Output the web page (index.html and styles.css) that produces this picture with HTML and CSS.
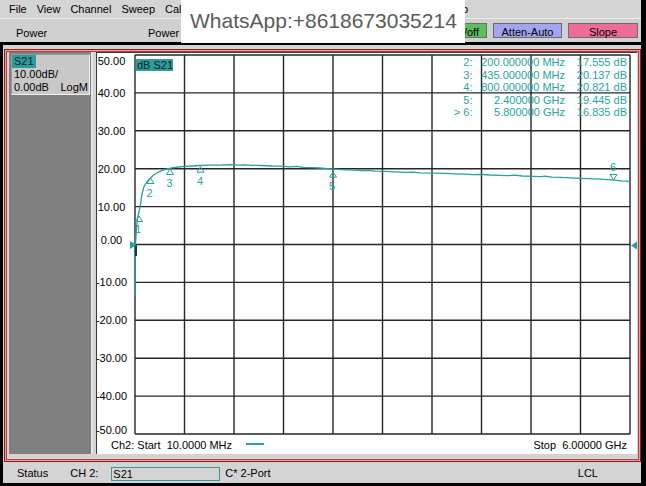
FILE: index.html
```html
<!DOCTYPE html>
<html>
<head>
<meta charset="utf-8">
<link rel="stylesheet" href="styles.css">
</head>
<body>
<div class="app">
  <div class="menubar">
    <span class="menu-item">File</span>
    <span class="menu-item">View</span>
    <span class="menu-item">Channel</span>
    <span class="menu-item">Sweep</span>
    <span class="menu-item">Calibration</span>
    <span class="menu-item menu-help">Help</span>
  </div>
  <div class="toolbar">
    <span class="tb-label tb-first">Power</span>
    <span class="tb-label">Power</span>
    <span class="tb-btn btn-green">On/off</span>
    <span class="tb-btn btn-atten">Atten-Auto</span>
    <span class="tb-btn btn-slope">Slope</span>
  </div>
  <div class="main">
    <div class="frame">
      <div class="side">
        <div class="side-box">
          <div class="line"><span class="sel">S21</span></div>
          <div class="line pad">10.00dB/</div>
          <div class="line pad split"><span>0.00dB</span><span>LogM</span></div>
        </div>
      </div>
      <div class="plot">
        <svg class="chart" width="540" height="385" viewBox="97 53 540 385">
          <g class="grid">
            <line x1="135" y1="55" x2="135" y2="434"/>
            <line x1="184.5" y1="55" x2="184.5" y2="434"/>
            <line x1="234" y1="55" x2="234" y2="434"/>
            <line x1="283.5" y1="55" x2="283.5" y2="434"/>
            <line x1="333" y1="55" x2="333" y2="434"/>
            <line x1="382.5" y1="55" x2="382.5" y2="434"/>
            <line x1="432" y1="55" x2="432" y2="434"/>
            <line x1="481.5" y1="55" x2="481.5" y2="434"/>
            <line x1="531" y1="55" x2="531" y2="434"/>
            <line x1="580.5" y1="55" x2="580.5" y2="434"/>
            <line x1="630" y1="55" x2="630" y2="434"/>
            <line x1="135" y1="55" x2="630" y2="55"/>
            <line x1="135" y1="92.9" x2="630" y2="92.9"/>
            <line x1="135" y1="130.8" x2="630" y2="130.8"/>
            <line x1="135" y1="168.7" x2="630" y2="168.7"/>
            <line x1="135" y1="206.6" x2="630" y2="206.6"/>
            <line x1="135" y1="244.5" x2="630" y2="244.5"/>
            <line x1="135" y1="282.4" x2="630" y2="282.4"/>
            <line x1="135" y1="320.3" x2="630" y2="320.3"/>
            <line x1="135" y1="358.2" x2="630" y2="358.2"/>
            <line x1="135" y1="396.1" x2="630" y2="396.1"/>
            <line x1="135" y1="434" x2="630" y2="434"/>
          </g>
          <g class="ylabels">
            <text x="111.5" y="65">50.00</text>
            <text x="111.5" y="96.5">40.00</text>
            <text x="111.5" y="134.5">30.00</text>
            <text x="111.5" y="172.5">20.00</text>
            <text x="111.5" y="210.5">10.00</text>
            <text x="111.5" y="244">0.00</text>
            <text x="111.5" y="286">-10.00</text>
            <text x="111.5" y="324">-20.00</text>
            <text x="111.5" y="362">-30.00</text>
            <text x="111.5" y="400">-40.00</text>
            <text x="111.5" y="434">-50.00</text>
          </g>
          <rect class="tag" x="136" y="59" width="37" height="12"/>
          <text class="tag-text" x="137" y="69">dB S21</text>
          <polyline class="trace" points="135,296 135,260 135.5,244 136.5,228 137.5,218 139,212 140.5,204 142,194 143.5,188 145.5,184 148,180.5 150.5,178 153,175.5 156,173.5 159,171.8 163,170.2 167,169 172,167.8 178,167 185,166.4 192,166 200,165.5 210,165.2 222,165 232,164.6 238,165.1 245,164.9 252,165.3 262,165.5 272,166 281,166.2 290,166.8 297,166.3 303,167.4 312,167.6 320,168 327,168.6 335,169.2 345,169.8 355,170.1 362,170.6 368,170.3 375,171.1 385,171.4 395,171.9 405,172.3 413,172.1 420,172.8 432,173.2 445,173.4 455,173.9 465,174.2 472,174.6 480,174.4 490,175 500,175.3 508,175.6 515,175.2 522,176 533,176.4 541,176.6 545,176.2 552,177.1 560,177.4 570,177.8 580,178.3 590,178.7 600,179.1 608,179.6 615,180.1 622,180.8 630,181.4"/>
          <line class="refline" x1="136" y1="244" x2="136" y2="256"/>
          <polygon class="ref" points="130,241 136.5,245 130,249"/>
          <polygon class="ref" points="637,241.5 631,245.5 637,249.5"/>
          <g class="mk">
            <polygon points="139,216 142.5,221.5 135.5,221.5"/>
            <polygon points="150.5,178 154,183.5 147,183.5"/>
            <polygon points="170,169 173.5,174.5 166.5,174.5"/>
            <polygon points="200.5,166.7 204,172.2 197,172.2"/>
            <polygon points="333,171.7 336.5,177.2 329.5,177.2"/>
            <polygon points="613.5,180 617,174.5 610,174.5"/>
          </g>
          <g class="mk-label">
            <text x="138" y="233">1</text>
            <text x="149.5" y="197">2</text>
            <text x="169.5" y="187">3</text>
            <text x="200" y="184.5">4</text>
            <text x="332" y="189.5">5</text>
            <text x="613" y="170.5">6</text>
          </g>
        </svg>
        <div class="readout">
          <span>2:</span><span>200.000000 MHz</span><span>17.555 dB</span>
          <span>3:</span><span>435.000000 MHz</span><span>20.137 dB</span>
          <span>4:</span><span>800.000000 MHz</span><span>20.821 dB</span>
          <span>5:</span><span>2.400000 GHz</span><span>19.445 dB</span>
          <span>&gt; 6:</span><span>5.800000 GHz</span><span>16.835 dB</span>
        </div>
        <div class="footer">
          <span class="start">Ch2: Start  10.0000 MHz</span>
          <span class="dash"></span>
          <span class="stop">Stop  6.00000 GHz</span>
        </div>
      </div>
    </div>
  </div>
  <div class="status">
    <span class="st-status">Status</span>
    <span class="st-ch">CH 2:</span>
    <span class="st-box">S21</span>
    <span class="st-port">C* 2-Port</span>
    <span class="st-lcl">LCL</span>
  </div>
  <div class="wa">WhatsApp:+8618673035214</div>
</div>
</body>
</html>
```
FILE: styles.css
```css
* { box-sizing: border-box; }

body {
  margin: 0;
  background: #000;
  font-family: "Liberation Sans", Arial, sans-serif;
  font-size: 11px;
  color: #000;
}

.app {
  position: relative;
  width: 646px;
  height: 486px;
  display: flex;
  flex-direction: column;
  overflow: hidden;
}

.menubar {
  height: 19px;
  margin-right: 5px;
  padding: 1px 0 0 4px;
  background: #d4d4d4;
  border-bottom: 1px solid #ececec;
  display: flex;
  line-height: 17px;
  white-space: nowrap;
}

.menu-item { padding: 0 5px; }

.menu-help { margin-left: 218px; }

.toolbar {
  height: 23px;
  margin-right: 5px;
  padding: 0 3px 0 16px;
  background: #d0d0d0;
  display: flex;
  align-items: flex-start;
  white-space: nowrap;
}

.tb-label {
  margin-top: 8px;
  line-height: 13px;
}

.tb-first { width: 132px; }

.tb-btn {
  margin-top: 4px;
  height: 15px;
  border: 1px solid #6c6c6c;
  padding-top: 2px;
  line-height: 12px;
  text-align: center;
}

.btn-green {
  margin-left: auto;
  padding-left: 7px;
  padding-right: 7px;
  background: #5cbf5c;
}

.btn-atten {
  width: 69px;
  margin-left: 6px;
  background: #a3a3f2;
}

.btn-slope {
  width: 70px;
  margin-left: 6px;
  background: #f06c98;
}

.main {
  height: 417px;
  margin: 3px 5px 0 3px;
  padding: 4px 0 0 1px;
  background: #d4d4d4;
}

.frame {
  height: 413px;
  border: 1px solid #8a1c1c;
  box-shadow: inset 0 0 0 1px #e2a4a4, inset 0 0 0 2px #b83c3c;
  padding: 2px 3px 7px 4px;
  background: #d4d4d4;
  display: flex;
  gap: 3px;
}

.side {
  width: 84px;
  background: #808080;
  border-right: 2px solid #e6e6e6;
  padding: 2px 1px 0 2px;
}

.side-box {
  height: 41px;
  background: #c8c8c8;
  border: 1px solid;
  border-color: #9a9a9a #efefef #efefef #9a9a9a;
}

.line {
  line-height: 13px;
  height: 13px;
}

.pad { padding-left: 2px; }

.split {
  display: flex;
  justify-content: space-between;
  padding-right: 1px;
}

.sel {
  display: inline-block;
  padding: 0 2px;
  background: #2f9b9b;
  color: #0a2a2a;
}

.plot {
  position: relative;
  flex: 1;
  background: #fff;
  border-top: 1px solid #3a3a3a;
  border-left: 1px solid #3a3a3a;
  display: flex;
  flex-direction: column;
}

.chart { display: block; }

.grid line {
  stroke: #262626;
  stroke-width: 1.4;
}

.ylabels text {
  font-size: 11px;
  text-anchor: middle;
  fill: #000;
}

.tag { fill: #2f9b9b; }

.tag-text {
  font-size: 11px;
  fill: #0a2a2a;
}

.trace {
  fill: none;
  stroke: #2a9f9f;
  stroke-width: 1.3;
}

.refline {
  stroke: #163f3f;
  stroke-width: 2;
}

.ref { fill: #2a9f9f; }

.mk polygon {
  fill: none;
  stroke: #2a9f9f;
  stroke-width: 1;
}

.mk-label text {
  font-size: 11px;
  text-anchor: middle;
  fill: #2a9f9f;
}

.readout {
  position: absolute;
  top: 3.3px;
  right: 10px;
  display: grid;
  grid-template-columns: 30px 92.5px 62px;
  text-align: right;
  line-height: 12.4px;
  color: #29a3a3;
  white-space: pre;
}

.footer {
  height: 16px;
  display: flex;
  align-items: flex-start;
  line-height: 14px;
  white-space: pre;
}

.start { padding-left: 14px; }

.dash {
  width: 18px;
  height: 2px;
  margin: 5px 0 0 14px;
  background: #2a9f9f;
}

.stop {
  margin-left: auto;
  padding-right: 10px;
}

.status {
  height: 21px;
  margin: 0 5px 0 3px;
  padding-top: 2px;
  background: #d4d4d4;
  display: flex;
  align-items: flex-start;
  line-height: 19px;
  white-space: nowrap;
}

.st-status { padding-left: 14px; }

.st-ch { margin-left: 22px; }

.st-box {
  width: 109px;
  height: 14px;
  margin: 3px 0 0 13px;
  padding-left: 1px;
  border: 1px solid #3a9a9a;
  line-height: 12px;
}

.st-port { margin-left: 5px; }

.st-lcl {
  margin-left: auto;
  padding-right: 43px;
}

.wa {
  position: absolute;
  left: 181px;
  top: 0;
  width: 284px;
  height: 43px;
  padding: 9px 0 0 9px;
  background: #fff;
  color: #5b5b5b;
  font-size: 21px;
  line-height: 24px;
  white-space: nowrap;
}
```
